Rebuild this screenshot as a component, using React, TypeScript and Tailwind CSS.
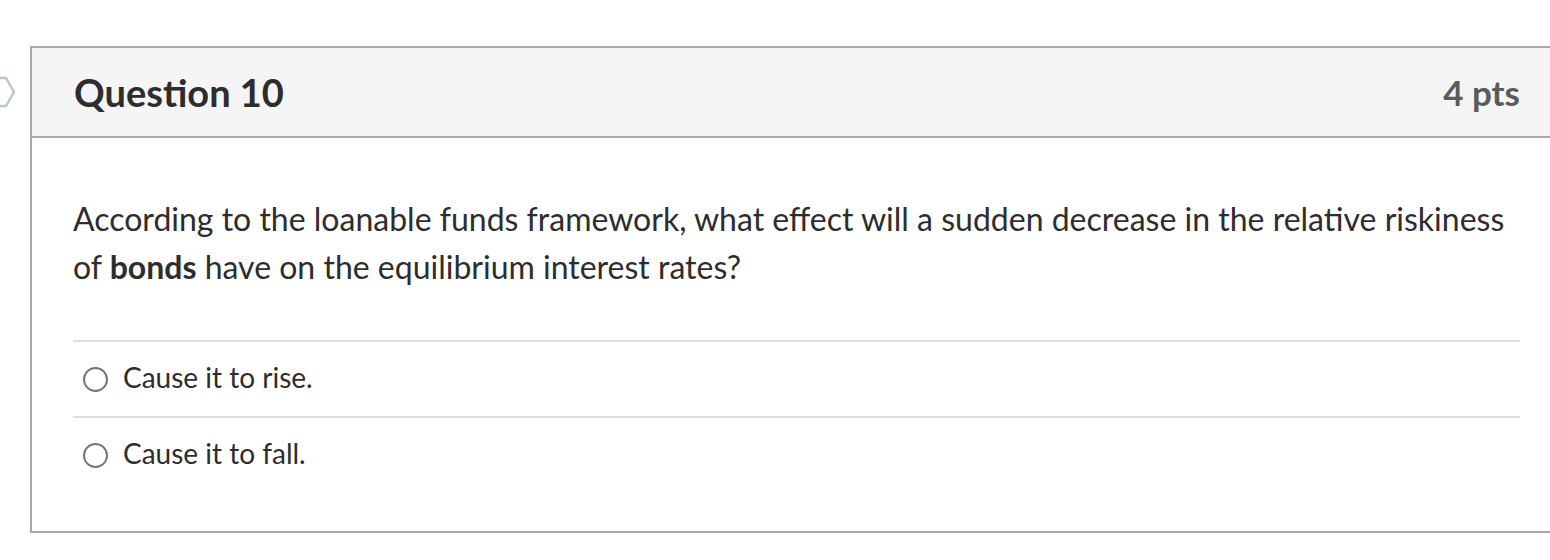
const answers = ["Cause it to rise.", "Cause it to fall."];

export default function App() {
  return (
    <div className="relative h-[560px] w-[1550px] overflow-hidden bg-white font-['Lato','Noto_Sans',sans-serif] text-[#2d2d2d]">
      <svg className="absolute left-[-6px] top-[76px]" width="24" height="32" viewBox="0 0 24 32" fill="none">
        <path d="M2 2 H12 L20 16 L12 30 H2" stroke="#b7c6cf" strokeWidth="2.5" strokeLinejoin="round" />
      </svg>

      <div className="pt-[46px] pl-[30px]">
        <div className="w-[1540px] border-y-2 border-l-2 border-[#a8a8a8]">
          <div className="flex h-[90px] items-center justify-between border-b-2 border-[#a8a8a8] bg-[#f5f5f5] pl-[42px] pr-[50px]">
            <h2 className="text-[38px] font-bold text-[#2d2d2d]">Question 10</h2>
            <span className="text-[35px] font-bold text-[#5b5b5b]">4 pts</span>
          </div>

          <div className="pl-[41px] pr-[50px] pt-[57px] pb-[39px]">
            <p className="text-[32px] leading-[48px]">
              According to the loanable funds framework, what effect will a sudden decrease in the relative riskiness of{" "}
              <strong>bonds</strong> have on the equilibrium interest rates?
            </p>

            <div className="mt-[49px] border-t-2 border-[#dddddd]">
              {answers.map((answer, index) => (
                <div
                  key={answer}
                  className={`flex h-[74px] items-center gap-[15px] pl-[10px] ${index === 0 ? "box-content border-b-2 border-[#dddddd]" : ""}`}
                >
                  <span className="h-[25px] w-[25px] rounded-full border-2 border-[#767676] bg-white" />
                  <span className="pb-[5px] text-[28px]">{answer}</span>
                </div>
              ))}
            </div>
          </div>
        </div>
      </div>
    </div>
  );
}
